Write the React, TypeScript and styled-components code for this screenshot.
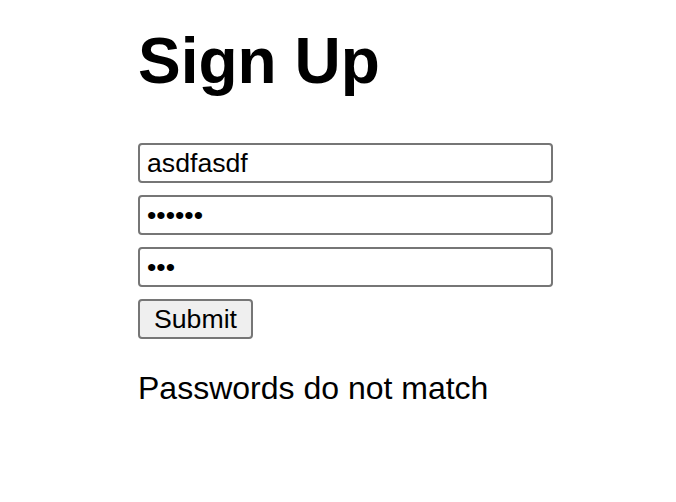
import React, { useState } from 'react';
import styled, { createGlobalStyle } from 'styled-components';

const GlobalStyle = createGlobalStyle`
  html, body {
    margin: 0;
    padding: 0;
    background: #fff;
  }

  body {
    font-family: 'Liberation Sans', Arial, Helvetica, sans-serif;
    color: #000;
  }
`;

const Page = styled.main`
  padding: 24px 0 0 138px;
`;

const Title = styled.h1`
  margin: 0 0 45px;
  font-size: 64px;
  line-height: 74px;
  font-weight: 700;
`;

const Form = styled.form`
  display: flex;
  flex-direction: column;
  align-items: flex-start;
  gap: 12px;
  width: 415px;
`;

const Field = styled.input`
  box-sizing: border-box;
  width: 100%;
  height: 40px;
  margin: 0;
  padding: 0 7px;
  border: 2px solid #767676;
  border-radius: 4px;
  background: #fff;
  font-family: inherit;
  font-size: 26.67px;
  color: #000;
  outline: none;

  &[type='password'] {
    -webkit-text-security: disc;
    letter-spacing: 0;
  }
`;

const SubmitButton = styled.button`
  box-sizing: border-box;
  height: 40px;
  margin: 0;
  padding: 0 14px;
  border: 2px solid #767676;
  border-radius: 4px;
  background: #efefef;
  font-family: inherit;
  font-size: 26.67px;
  color: #000;
  cursor: pointer;
`;

const Message = styled.p`
  margin: 31px 0 0;
  font-size: 32px;
  line-height: normal;
`;

const App = () => {
  const [username, setUsername] = useState('asdfasdf');
  const [password, setPassword] = useState('qwerty');
  const [confirm, setConfirm] = useState('abc');

  const mismatch = password !== confirm;

  return (
    <>
      <GlobalStyle />
      <Page>
        <Title>Sign Up</Title>
        <Form onSubmit={(e) => e.preventDefault()}>
          <Field
            type="text"
            value={username}
            onChange={(e) => setUsername(e.target.value)}
          />
          <Field
            type="password"
            value={password}
            onChange={(e) => setPassword(e.target.value)}
          />
          <Field
            type="password"
            value={confirm}
            onChange={(e) => setConfirm(e.target.value)}
          />
          <SubmitButton type="submit">Submit</SubmitButton>
        </Form>
        {mismatch && <Message>Passwords do not match</Message>}
      </Page>
    </>
  );
};

export default App;
